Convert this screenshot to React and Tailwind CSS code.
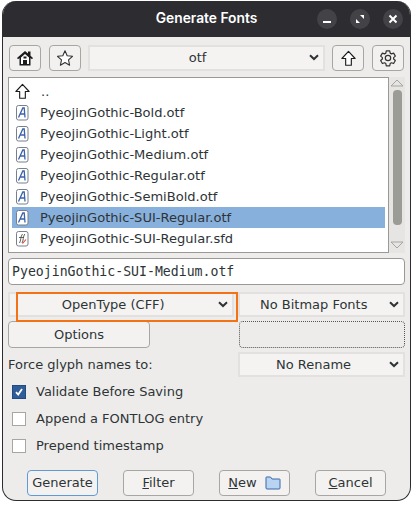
import React from 'react';

const files = [
  ['PyeojinGothic-Bold.otf', 'otf'],
  ['PyeojinGothic-Light.otf', 'otf'],
  ['PyeojinGothic-Medium.otf', 'otf'],
  ['PyeojinGothic-Regular.otf', 'otf'],
  ['PyeojinGothic-SemiBold.otf', 'otf'],
  ['PyeojinGothic-SUI-Regular.otf', 'otf', true],
  ['PyeojinGothic-SUI-Regular.sfd', 'sfd'],
];

const Chevron = () => (
  <svg width="10" height="7" viewBox="0 0 10 7" fill="none" stroke="#2e3436" strokeWidth="2">
    <path d="M1 1.2l4 3.8 4-3.8" />
  </svg>
);

const UpArrow = ({ size = 18 }) => (
  <svg width={size} height={size} viewBox="0 0 18 18" fill="#fff" stroke="#1c1c1c" strokeWidth="1.2" strokeLinejoin="round">
    <path d="M9 1.5L2 9h4v7.2h6V9h4z" />
  </svg>
);

const FileIcon = ({ type }) => (
  <svg width="13" height="16" viewBox="0 0 13 16">
    <rect x="0.5" y="0.5" width="11.5" height="14.5" rx="2" fill="#fff" stroke="#77808c" />
    {type === 'otf' ? (
      <path d="M2.5 12.5L6.8 3h1.4l.8 9.5M4.2 9h4.6" fill="none" stroke="#3a62a8" strokeWidth="1.3" />
    ) : (
      <>
        <path d="M3.5 12c1.5-2 1-7 3-9M6 12c1.5-2 1-7 2.8-9M3 6.5h5" fill="none" stroke="#55504a" strokeWidth="0.9" />
        <path d="M6.5 12.5l3.5-4" fill="none" stroke="#d9481c" strokeWidth="1.1" />
      </>
    )}
  </svg>
);

const ToolButton = ({ children }) => (
  <button className="w-[32px] h-[26px] flex items-center justify-center bg-[#f2f1f0] border border-[#a8a6a2] rounded-[4px]">
    {children}
  </button>
);

const Select = ({ label, className = '', pad = 'pr-[26px]' }) => (
  <div className={`relative flex items-center justify-center bg-[#f4f3f2] border-2 border-[#e2e1df] text-[13px] text-[#2e3436] ${pad} ${className}`}>
    <span>{label}</span>
    <span className="absolute right-[4px] top-[7px] flex"><Chevron /></span>
  </div>
);

const Button = ({ children, primary }) => (
  <button className={`w-[71px] h-[26px] flex items-center justify-center gap-[8px] bg-[#f3f2f1] rounded-[4px] text-[13px] text-[#2e3436] border ${primary ? 'border-[#5f9bd6]' : 'border-[#a8a6a2]'}`}>
    {children}
  </button>
);

const Check = ({ label, checked }) => (
  <label className="h-[27px] flex items-center gap-[10px] pl-[4px] text-[13px] text-[#2e3436]">
    {checked ? (
      <span className="w-[14px] h-[14px] flex items-center justify-center bg-[#2f5d9a] border border-[#234a80]">
        <svg width="10" height="10" viewBox="0 0 10 10" fill="none" stroke="#fff" strokeWidth="1.8"><path d="M2 5.2l2.2 2.4L8 2" /></svg>
      </span>
    ) : (
      <span className="w-[14px] h-[14px] bg-white border border-[#a8a6a2]" />
    )}
    <span>{label}</span>
  </label>
);

export default function App() {
  return (
    <div className="w-[414px] h-[505px] bg-white pl-[2px] pt-[1px] font-['DejaVu_Sans',sans-serif] overflow-hidden">
      <div className="w-[409px] h-[500px] flex flex-col bg-[#edeceb] border-x border-b border-[#2d2c31] rounded-t-[14px] rounded-b-[14px] overflow-hidden">
        {/* Title bar */}
        <div className="relative h-[36px] shrink-0 flex items-center justify-center pb-[1px] bg-[#2d2c31] text-white text-[13.8px] font-semibold font-['Inter',sans-serif] -mx-[1px]">
          Generate Fonts
          <div className="absolute right-[8px] top-[8px] flex gap-[13px]">
            <span className="w-[20px] h-[20px] rounded-full bg-[#434247] flex items-center justify-center">
              <svg width="10" height="10" viewBox="0 0 10 10" fill="#fff"><rect x="1" y="7" width="8" height="2" /></svg>
            </span>
            <span className="w-[20px] h-[20px] rounded-full bg-[#434247] flex items-center justify-center">
              <svg width="10" height="10" viewBox="0 0 10 10" fill="#fff"><path d="M5 1h4v4zM1 5v4h4z" /></svg>
            </span>
            <span className="w-[20px] h-[20px] rounded-full bg-[#434247] flex items-center justify-center">
              <svg width="10" height="10" viewBox="0 0 10 10" fill="none" stroke="#fff" strokeWidth="2"><path d="M1.5 1.5l7 7M8.5 1.5l-7 7" /></svg>
            </span>
          </div>
        </div>

        <div className="flex-1 flex flex-col px-[5px]">
          {/* Toolbar */}
          <div className="flex items-center mt-[8px] pl-[1px]">
            <ToolButton>
              <svg width="18" height="18" viewBox="0 0 18 18">
                <path d="M1 9L9 2l3 2.6V2.5h2.5v4.3L17 9l-1 1.2-1.5-1.2v7.5h-11V9L2 10.2z" fill="#1c1c1c" />
                <path d="M5 8.5L9 5l4 3.5V15h-2v-4H7v4H5z" fill="#fff" />
                <rect x="7.5" y="7.5" width="3" height="2" fill="#1c1c1c" />
              </svg>
            </ToolButton>
            <div className="ml-[8px]">
              <ToolButton>
                <svg width="18" height="18" viewBox="0 0 18 18" fill="#fff" stroke="#333" strokeWidth="1.1" strokeLinejoin="round">
                  <path d="M9 1.8l2.2 4.9 5.3.6-4 3.6 1.1 5.3L9 13.5l-4.6 2.7 1.1-5.3-4-3.6 5.3-.6z" />
                </svg>
              </ToolButton>
            </div>
            <div className="ml-[7px]">
              <Select label="otf" className="w-[237px] h-[26px]" pad="pr-[18px]" />
            </div>
            <div className="ml-[7px]">
              <ToolButton><UpArrow size={17} /></ToolButton>
            </div>
            <div className="ml-[8px]">
              <ToolButton>
                <svg width="18" height="18" viewBox="0 0 24 24" fill="none" stroke="#333" strokeWidth="1.6" strokeLinejoin="round">
                  <path d="M9.7 2.5h4.6l.6 3 1.7 1 2.9-1 2.3 4-2.3 2 0 1.9 2.3 2-2.3 4-2.9-1-1.7 1-.6 3H9.7l-.6-3-1.7-1-2.9 1-2.3-4 2.3-2v-1.9l-2.3-2 2.3-4 2.9 1 1.7-1z" />
                  <circle cx="12" cy="12" r="3.6" />
                </svg>
              </ToolButton>
            </div>
          </div>

          {/* File list */}
          <div className="flex mt-[6px] h-[176px]">
            <div className="w-[382px] bg-white border border-[#9a9996] pt-[3px] text-[13.05px] text-[#2e3436] overflow-hidden">
              <div className="h-[21px] flex items-center pl-[5px]">
                <span className="w-[27px] flex"><UpArrow size={17} /></span>
                <span>..</span>
              </div>
              {files.map(([name, type, selected]) => (
                <div key={name} className={`h-[21px] flex items-center pl-[3px] mx-[3px] ${selected ? 'bg-[#88b0dc]' : ''}`}>
                  <span className="w-[25px] flex pl-[1px]"><FileIcon type={type} /></span>
                  <span>{name}</span>
                </div>
              ))}
            </div>
            <div className="w-[16px] flex flex-col items-center bg-[#e6e5e3]">
              <svg width="14" height="8" viewBox="0 0 14 8" className="mt-[2px]" fill="none" stroke="#a5a5a0"><path d="M1 7l6-6 6 6z" /></svg>
              <div className="w-[9px] h-[135px] mt-[3px] rounded-[4px] bg-[#9b9c96]" />
              <svg width="14" height="8" viewBox="0 0 14 8" className="mt-auto mb-[4px]" fill="none" stroke="#a5a5a0"><path d="M1 1l6 6 6-6z" /></svg>
            </div>
          </div>

          {/* File name */}
          <div className="mt-[5px] h-[27px] w-[397px] flex items-center pl-[3px] bg-white border border-[#9a9996] rounded-[4px] font-['DejaVu_Sans_Mono',monospace] text-[13.2px] text-[#2e3436]">
            PyeojinGothic-SUI-Medium.otf
          </div>

          {/* Format selects */}
          <div className="relative flex mt-[7px] h-[29px] gap-[4px]">
            <Select label="OpenType (CFF)" className="w-[227px] h-[25px]" pad="pr-[16px]" />
            <Select label="No Bitmap Fonts" className="w-[167px] h-[25px]" pad="pr-[16px]" />
            <div className="absolute left-[8px] top-[0px] w-[222px] h-[30px] border-2 border-[#f47216] pointer-events-none" />
          </div>

          {/* Options */}
          <div className="flex items-center h-[27px] justify-between">
            <button className="w-[142px] h-[27px] bg-[#f3f2f1] border border-[#a8a6a2] rounded-[4px] text-[13px] text-[#2e3436]">Options</button>
            <div className="w-[166px] h-[27px] border border-dotted border-[#555] rounded-[4px]" />
          </div>

          {/* Rename */}
          <div className="flex items-center justify-between mt-[4px] h-[25px]">
            <span className="text-[13px] text-[#2e3436]">Force glyph names to:</span>
            <Select label="No Rename" className="w-[167px] h-[25px]" pad="pr-[16px]" />
          </div>

          {/* Checks */}
          <div className="flex flex-col mt-[1px]">
            <Check label="Validate Before Saving" checked />
            <Check label="Append a FONTLOG entry" />
            <Check label="Prepend timestamp" />
          </div>

          {/* Actions */}
          <div className="flex justify-between mt-[11px] pl-[19px] pr-[19px]">
            <Button primary>Generate</Button>
            <Button><span><span className="underline">F</span>ilter</span></Button>
            <Button>
              <span><span className="underline">N</span>ew</span>
              <svg width="16" height="14" viewBox="0 0 16 14"><path d="M1 3V1.5A.5.5 0 011.5 1h4l1.5 2h7.5a.5.5 0 01.5.5V12a1 1 0 01-1 1H2a1 1 0 01-1-1z" fill="#b8d4f2" stroke="#3b66a8" /></svg>
            </Button>
            <Button><span><span className="underline">C</span>ancel</span></Button>
          </div>
        </div>
      </div>
    </div>
  );
}
